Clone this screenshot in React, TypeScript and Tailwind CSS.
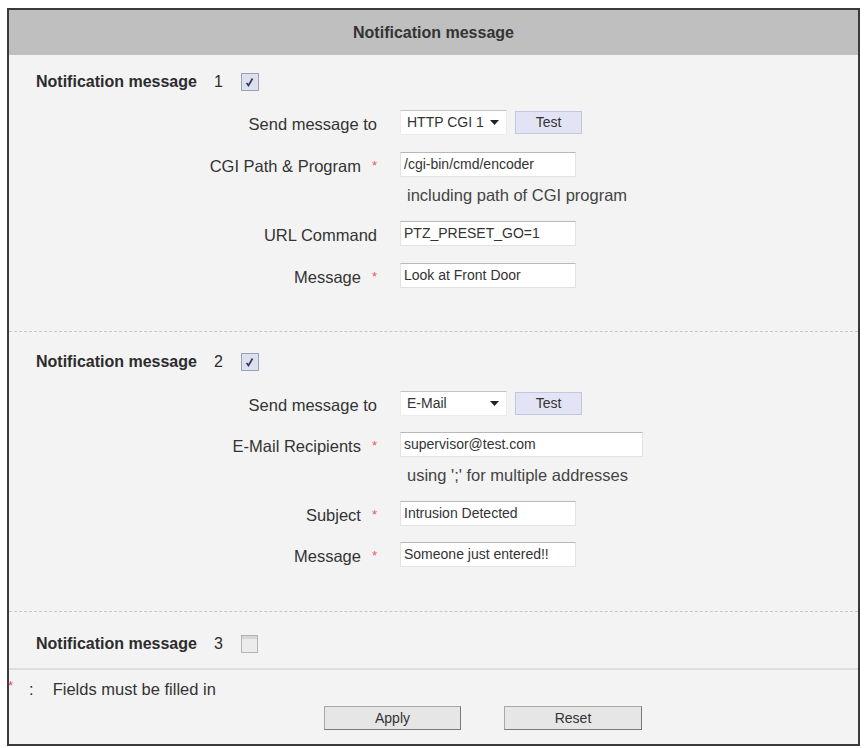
import type { ReactNode } from "react";

const FONT = { fontFamily: '"Liberation Sans", Arial, sans-serif' };

function Checkbox({ checked }: { checked: boolean }) {
  if (!checked) {
    return (
      <span className="inline-block w-[17px] h-[18px] border border-[#b4b4b4] bg-[#ececec] shadow-[inset_0_3px_0_#d6d6d6]" />
    );
  }
  return (
    <span className="inline-flex items-center justify-center w-[18px] h-[18px] border border-[#9aa2bb] bg-[#dde1ec]">
      <svg width="11" height="11" viewBox="0 0 11 11">
        <path d="M2.5 6 L4.5 8.5 L8.5 1.5" fill="none" stroke="#2f3c66" strokeWidth="1.7" />
      </svg>
    </span>
  );
}

function SectionTitle({ n, checked }: { n: number; checked: boolean }) {
  return (
    <div className="flex items-center h-[24px] pl-[27px] text-[#2c2c2c]">
      <span className="font-bold text-[16px]">Notification message</span>
      <span className="ml-[17px] text-[16px]">{n}</span>
      <span className="ml-[18px] flex">
        <Checkbox checked={checked} />
      </span>
    </div>
  );
}

function Row({ label, required, children, className = "" }: { label: string; required?: boolean; children: ReactNode; className?: string }) {
  return (
    <div className={`flex items-center h-[25px] ${className}`}>
      <div className="w-[368px] shrink-0 text-right text-[16.5px] text-[#333] translate-y-[2px]">
        {label}
        {required && <span className="ml-[11px] text-[13px] text-[#e06060] relative -top-[2px]">*</span>}
      </div>
      <div className="ml-[23px] flex items-center">{children}</div>
    </div>
  );
}

function TextBox({ value, width }: { value: string; width: number }) {
  return (
    <div
      className="h-[25px] bg-white border border-[#e2e2e2] border-t-[#b8b8b8] pl-[3px] text-[14px] leading-[23px] text-[#333] whitespace-nowrap"
      style={{ width }}
    >
      {value}
    </div>
  );
}

function SendTo({ value }: { value: string }) {
  return (
    <>
      <div className="w-[107px] h-[25px] bg-white border border-[#ececec] border-t-[#c4c4c4] flex items-center justify-between pl-[6px] pr-[7px] text-[14px] text-[#333]">
        <span>{value}</span>
        <svg width="9" height="5" viewBox="0 0 9 5">
          <path d="M0 0 H9 L4.5 5 Z" fill="#222" />
        </svg>
      </div>
      <div className="ml-[8px] w-[67px] h-[23px] bg-[#e2e4f6] border border-[#c3c7de] flex items-center justify-center text-[14px] text-[#333]">
        Test
      </div>
    </>
  );
}

function Helper({ text, className = "" }: { text: string; className?: string }) {
  return (
    <div className={`h-[24px] leading-[24px] pl-[398px] text-[16.5px] text-[#444] ${className}`}>{text}</div>
  );
}

export default function App() {
  return (
    <div className="bg-white w-[864px] h-[748px] pt-[8px] pl-[7px]" style={FONT}>
      <div className="w-[853px] border-2 border-[#3a3a3a] bg-[#f3f3f3]">
        <div className="h-[45px] bg-[#bfbfbf] flex items-center justify-center font-bold text-[16px] text-[#333]">
          Notification message
        </div>

        <div className="pt-[15px] pb-[43px]">
          <SectionTitle n={1} checked />
          <Row label="Send message to" className="mt-[16px]">
            <SendTo value="HTTP CGI 1" />
          </Row>
          <Row label="CGI Path & Program" required className="mt-[17px]">
            <TextBox value="/cgi-bin/cmd/encoder" width={176} />
          </Row>
          <Helper text="including path of CGI program" className="mt-[6px]" />
          <Row label="URL Command" className="mt-[14px]">
            <TextBox value="PTZ_PRESET_GO=1" width={176} />
          </Row>
          <Row label="Message" required className="mt-[17px]">
            <TextBox value="Look at Front Door" width={176} />
          </Row>
        </div>

        <div className="border-t border-dashed border-[#c6c6c6] pt-[18px] pb-[44px]">
          <SectionTitle n={2} checked />
          <Row label="Send message to" className="mt-[17px]">
            <SendTo value="E-Mail" />
          </Row>
          <Row label="E-Mail Recipients" required className="mt-[16px]">
            <TextBox value="supervisor@test.com" width={243} />
          </Row>
          <Helper text="using ';' for multiple addresses" className="mt-[6px]" />
          <Row label="Subject" required className="mt-[14px]">
            <TextBox value="Intrusion Detected" width={176} />
          </Row>
          <Row label="Message" required className="mt-[16px]">
            <TextBox value="Someone just entered!!" width={176} />
          </Row>
        </div>

        <div className="border-t border-dashed border-[#c6c6c6] pt-[20px] pb-[12px]">
          <SectionTitle n={3} checked={false} />
        </div>
        <div className="h-[2px] bg-[#dedede]" />

        <div className="pt-[9px] pb-[14px]">
          <div className="flex items-center h-[20px] text-[16.5px] text-[#333]">
            <span className="text-[#e05050] text-[13px] -ml-[1px] relative -top-[3px]">*</span>
            <span className="ml-[16px]">:</span>
            <span className="ml-[19px]">Fields must be filled in</span>
          </div>
          <div className="flex mt-[7px] pl-[315px] gap-[43px]">
            <div className="w-[137px] h-[24px] bg-[#e6e6e6] border border-[#a8a8a8] border-b-[#7a7a7a] border-r-[#7a7a7a] flex items-center justify-center text-[14px] text-[#333]">
              Apply
            </div>
            <div className="w-[138px] h-[24px] bg-[#e6e6e6] border border-[#a8a8a8] border-b-[#7a7a7a] border-r-[#7a7a7a] flex items-center justify-center text-[14px] text-[#333]">
              Reset
            </div>
          </div>
        </div>
      </div>
    </div>
  );
}
